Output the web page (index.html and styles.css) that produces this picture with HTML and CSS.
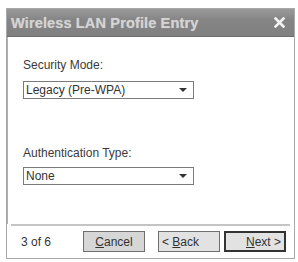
FILE: index.html
```html
<!DOCTYPE html>
<html>
<head>
<meta charset="utf-8">
<link rel="stylesheet" href="styles.css">
</head>
<body>
<div class="dialog">
  <div class="titlebar">
    <span class="title">Wireless LAN Profile Entry</span>
    <svg class="close" width="11" height="11" viewBox="0 0 11 11"><path d="M1.5 1.5 L9.5 9.5 M9.5 1.5 L1.5 9.5" stroke="#f2f2f2" stroke-width="2.6" stroke-linecap="square"/></svg>
  </div>
  <div class="content">
    <div class="label">Security Mode:</div>
    <div class="select"><span>Legacy (Pre-WPA)</span><span class="arrow"></span></div>
    <div class="label label2">Authentication Type:</div>
    <div class="select"><span>None</span><span class="arrow"></span></div>
  </div>
  <div class="footer">
    <span class="page">3 of 6</span>
    <button class="btn btn-cancel"><u>C</u>ancel</button>
    <button class="btn btn-back">&lt; <u>B</u>ack</button>
    <button class="btn btn-next"><u>N</u>ext &gt;</button>
  </div>
</div>
</body>
</html>
```

FILE: styles.css
```css
html, body {
  margin: 0;
  padding: 0;
  background: #ffffff;
}
body {
  font-family: "Liberation Sans", Arial, sans-serif;
  color: #333;
  width: 298px;
  height: 262px;
  overflow: hidden;
}
.dialog {
  margin: 8px 0 0 6px;
  width: 289px;
  height: 251px;
  border: 1px solid #a8a8a8;
  box-sizing: border-box;
  display: flex;
  flex-direction: column;
  background: #fff;
}
.titlebar {
  height: 28px;
  background: linear-gradient(#9a9a9a, #858585 40%, #808080);
  border-bottom: 1px solid #6e6e6e;
  box-sizing: border-box;
  display: flex;
  align-items: center;
  justify-content: space-between;
  padding: 0 9px 0 4px;
}
.title {
  font-weight: bold;
  font-size: 14.6px;
  color: #d4d4d4;
  letter-spacing: 0.1px;
  text-shadow: 0 0 1px rgba(255,255,255,0.4);
}
.close {
  display: block;
}
.content {
  flex: 1;
  padding: 21px 0 0 15px;
  border-left: 1px solid #b0b0b0;
}
.label {
  font-size: 12px;
  line-height: 14px;
  color: #3a3a3a;
  margin-bottom: 9px;
}
.label2 {
  margin-top: 47px;
  margin-bottom: 7px;
}
.select {
  width: 171px;
  height: 18px;
  box-sizing: border-box;
  border: 1px solid #7a7a7a;
  display: flex;
  align-items: center;
  justify-content: space-between;
  padding: 0 6px 0 2px;
  font-size: 12px;
  color: #333;
}
.arrow {
  width: 0;
  height: 0;
  border-left: 4px solid transparent;
  border-right: 4px solid transparent;
  border-top: 4px solid #333;
}
.footer {
  height: 31px;
  margin: 0 4px 0 4px;
  border-top: 2px solid #c4c4c4;
  display: flex;
  align-items: center;
  padding: 0 0 1px 0;
  font-size: 12px;
}
.page {
  width: 72px;
  padding-left: 10px;
  color: #333;
  box-sizing: border-box;
}
.btn {
  width: 62px;
  height: 21px;
  background: #d6d6d6;
  border: 1px solid #6f6f6f;
  font-family: "Liberation Sans", Arial, sans-serif;
  font-size: 12px;
  color: #333;
  padding: 0;
  margin: 0;
}
.btn-back {
  margin-left: 13px;
  background: #e2e2e2;
  text-align: left;
  padding-left: 3px;
}
.btn-next {
  margin-left: 4px;
  border: 2px solid #333;
  background: #e2e2e2;
  text-align: right;
  padding-right: 3px;
}
```
